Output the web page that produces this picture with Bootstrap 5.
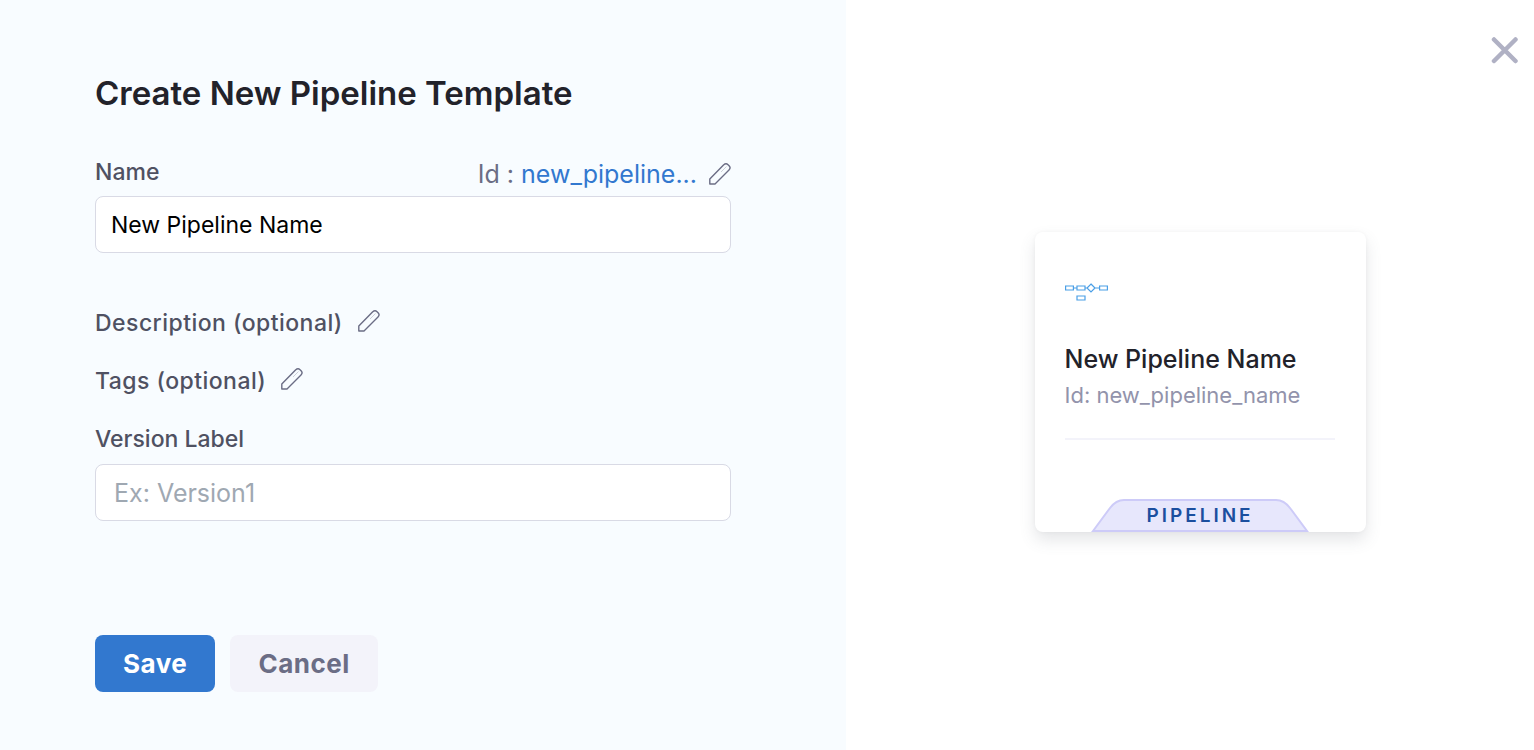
<!DOCTYPE html>
<html lang="en">
<head>
<meta charset="utf-8">
<meta name="viewport" content="width=device-width, initial-scale=1">
<title>Create New Pipeline Template</title>
<link href="https://cdn.jsdelivr.net/npm/bootstrap@5.3.0/dist/css/bootstrap.min.css" rel="stylesheet">
<style>
  body { font-family: Inter, "Liberation Sans", sans-serif; font-size: 23px; line-height: 32px; color: #22222a; background: #fff; }
  .form-side { flex: 0 0 55.15%; background: #f8fcff; padding: 73px 115px 58px 95px; }
  .preview-side { padding: 14px 0 0 20px; }
  .form-title { font-size: 33px; line-height: 40px; font-weight: 600; margin-bottom: 43px; color: #22222a; }
  .field-label { font-weight: 500; color: #4f5162; }
  .field-row { margin-top: 26px; }
  .first-row { margin-top: 54px; }
  .version-label { margin-bottom: 9px; }
  .spaced { letter-spacing: 0.02em; }
  .id-line { font-size: 25px; color: #6b6d85; padding-top: 2px; margin-bottom: -2px; }
  .id-line a { color: #3278cf; }
  .id-line .icon-btn { margin-left: 12px; }
  .spaced .icon-btn { margin: 0 0 5px 15px; }
  .text-field { height: 57px; padding: 0 15px; border: 1px solid #d9dae5; border-radius: 8px; font-size: 23px; color: #000; }
  .version-field { font-size: 25px; padding: 0 18px; }
  .text-field::placeholder { color: #9fa8b2; }
  .icon-btn { padding: 0; border: 0; background: none; line-height: 0; color: #6b6d85; }
  .actions { gap: 15px; margin-top: 114px; }
  .form-action { height: 57px; border: 0; border-radius: 8px; padding: 0 28px; font-size: 26px; font-weight: 700; letter-spacing: 0.02em; }
  .save-action, .save-action:hover { background: #3278cf; color: #fff; }
  .cancel-action, .cancel-action:hover { background: #f3f3fa; color: #6b6d85; }
  .close-action { top: 36px; right: 15px; color: #b0b1c4; }
  .template-card { width: 331px; height: 300px; border: 0; border-radius: 8px; padding: 51px 31px 0 30px; box-shadow: 0 0 4px rgba(40,41,61,.04), 0 8px 16px rgba(96,97,112,.16); }
  .template-name { font-size: 25px; line-height: 32px; font-weight: 500; margin: 42px 0 4px; color: #22222a; }
  .template-id { font-size: 22px; line-height: 32px; color: #9293ab; }
  .template-rule { margin: 27px 0 0; border-top: 2px solid #f3f3fa; opacity: 1; }
  .type-tab { bottom: 0; width: 218px; height: 33px; line-height: 30px; }
  .type-tab span { font-size: 19px; font-weight: 600; letter-spacing: 3px; color: #1b4f9f; }
</style>
</head>
<body>
<svg class="d-none" aria-hidden="true">
  <symbol id="pencil" viewBox="0 0 22 22">
    <path d="M.8 21V16L14.500 2Q17 -.200 19 1.700L20.300 3Q22 5 20 7L6 21Z" fill="none" stroke="currentColor" stroke-width="1.400" stroke-linejoin="round"/>
    <path d="M12 9L17.500 3.500" stroke="currentColor" stroke-width="1" opacity=".3"/>
  </symbol>
</svg>
<main class="d-flex min-vh-100 position-relative">
  <section class="form-side">
    <h1 class="form-title">Create New Pipeline Template</h1>
    <form>
      <div class="d-flex justify-content-between mb-2">
        <label class="field-label" for="name">Name</label>
        <div class="id-line d-flex align-items-center">
          <span>Id : <a class="text-decoration-none" href="#">new_pipeline...</a></span>
          <button class="icon-btn" type="button" aria-label="Edit id"><svg width="22" height="22"><use href="#pencil"/></svg></button>
        </div>
      </div>
      <input class="form-control text-field" id="name" type="text" value="New Pipeline Name">
      <div class="d-flex align-items-center field-label spaced first-row">
        <span>Description (optional)</span>
        <button class="icon-btn" type="button" aria-label="Edit description"><svg width="22" height="22"><use href="#pencil"/></svg></button>
      </div>
      <div class="d-flex align-items-center field-label spaced field-row">
        <span>Tags (optional)</span>
        <button class="icon-btn" type="button" aria-label="Edit tags"><svg width="22" height="22"><use href="#pencil"/></svg></button>
      </div>
      <label class="field-label d-block field-row version-label" for="version">Version Label</label>
      <input class="form-control text-field version-field" id="version" type="text" placeholder="Ex: Version1">
      <div class="d-flex actions">
        <button class="btn form-action save-action" type="submit">Save</button>
        <button class="btn form-action cancel-action" type="button">Cancel</button>
      </div>
    </form>
  </section>
  <section class="preview-side flex-fill d-flex align-items-center justify-content-center">
    <article class="card template-card">
      <svg width="44" height="18" viewBox="0 0 44 18" fill="none" stroke="#4b9fe6" stroke-width="1.200" aria-hidden="true">
        <path d="M.600 3H8.400V7H.600ZM12 3H20V7H12ZM34.600 3H42.400V7H34.600ZM12 13H20V17H12ZM26 1L30 5L26 9L22 5ZM8.400 5H12M20 5H22M30 5H34.600"/>
      </svg>
      <h2 class="template-name">New Pipeline Name</h2>
      <div class="template-id">Id: new_pipeline_name</div>
      <hr class="template-rule">
      <div class="type-tab position-absolute start-50 translate-middle-x text-center">
        <svg class="position-absolute top-0 start-0" width="218" height="33" viewBox="0 0 218 33" aria-hidden="true"><path d="M2 32L19 9Q25 1 33 1H185Q193 1 199 9L216 32Z" fill="#e7e7fc" stroke="#cdcbf8" stroke-width="2"/></svg>
        <span class="position-relative">PIPELINE</span>
      </div>
    </article>
  </section>
  <button class="icon-btn close-action position-absolute" type="button" aria-label="Close">
    <svg width="28" height="28" viewBox="0 0 28 28"><path d="M3 3.500L24.500 25M24.500 3.500L3 25" stroke="currentColor" stroke-width="4.500" stroke-linecap="round"/></svg>
  </button>
</main>
<script src="https://cdn.jsdelivr.net/npm/bootstrap@5.3.0/dist/js/bootstrap.bundle.min.js"></script>
</body>
</html>
